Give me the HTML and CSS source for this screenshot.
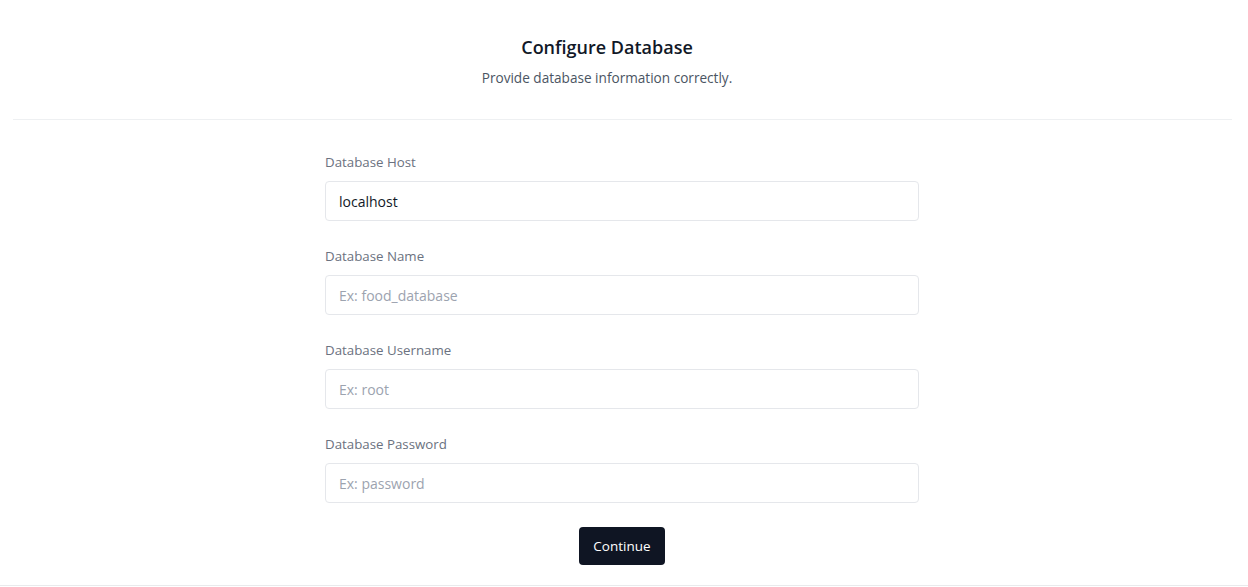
FILE: index.html
```html
<!DOCTYPE html>
<html lang="en">
<head>
<meta charset="utf-8">
<title>Configure Database</title>
<link rel="stylesheet" href="styles.css">
</head>
<body>
<div class="card">
  <header class="card-header">
    <h1 class="title">Configure Database</h1>
    <p class="subtitle">Provide database information correctly.</p>
  </header>
  <form class="form">
    <div class="field">
      <label class="label" for="host">Database Host</label>
      <input class="input" id="host" type="text" value="localhost">
    </div>
    <div class="field">
      <label class="label" for="name">Database Name</label>
      <input class="input" id="name" type="text" placeholder="Ex: food_database">
    </div>
    <div class="field">
      <label class="label" for="user">Database Username</label>
      <input class="input" id="user" type="text" placeholder="Ex: root">
    </div>
    <div class="field">
      <label class="label" for="pass">Database Password</label>
      <input class="input" id="pass" type="password" placeholder="Ex: password">
    </div>
    <div class="actions">
      <button class="btn" type="button">Continue</button>
    </div>
  </form>
</div>
</body>
</html>
```

FILE: styles.css
```css
* { box-sizing: border-box; }
html, body { margin: 0; padding: 0; background: #ffffff; }
body {
  font-family: "Open Sans", "Noto Sans", sans-serif;
  color: #111827;
}
.card {
  height: 586px;
  border-bottom: 1px solid #e9eaec;
}
.card-header {
  text-align: center;
  margin: 0 16px 0 13px;
  padding: 35px 31px 31px 0;
  border-bottom: 1px solid #eef0f2;
}
.title {
  margin: 0;
  font-size: 18px;
  line-height: 24px;
  font-weight: 600;
  color: #111827;
}
.subtitle {
  margin: 9px 0 0;
  font-size: 13.6px;
  line-height: 20px;
  color: #4b5563;
}
.form {
  width: 594px;
  margin: 0 0 0 325px;
  padding-top: 32px;
  display: flex;
  flex-direction: column;
  gap: 25px;
}
.field {
  display: flex;
  flex-direction: column;
  gap: 9px;
}
.label {
  font-size: 13.3px;
  line-height: 20px;
  color: #6b7280;
}
.input {
  height: 40px;
  border: 1px solid #e5e7eb;
  border-radius: 4px;
  padding: 0 12px 0 13px;
  font-family: inherit;
  font-size: 14px;
  color: #111827;
  background: #fff;
  outline: none;
}
.input::placeholder { color: #9ca3af; }
.actions {
  display: flex;
  justify-content: center;
  margin-top: -1px;
}
.btn {
  height: 38px;
  padding: 0 14px;
  border: none;
  border-radius: 4px;
  background: #0f1523;
  color: #ffffff;
  font-family: inherit;
  font-size: 13.5px;
  font-weight: 500;
  cursor: pointer;
}
```
